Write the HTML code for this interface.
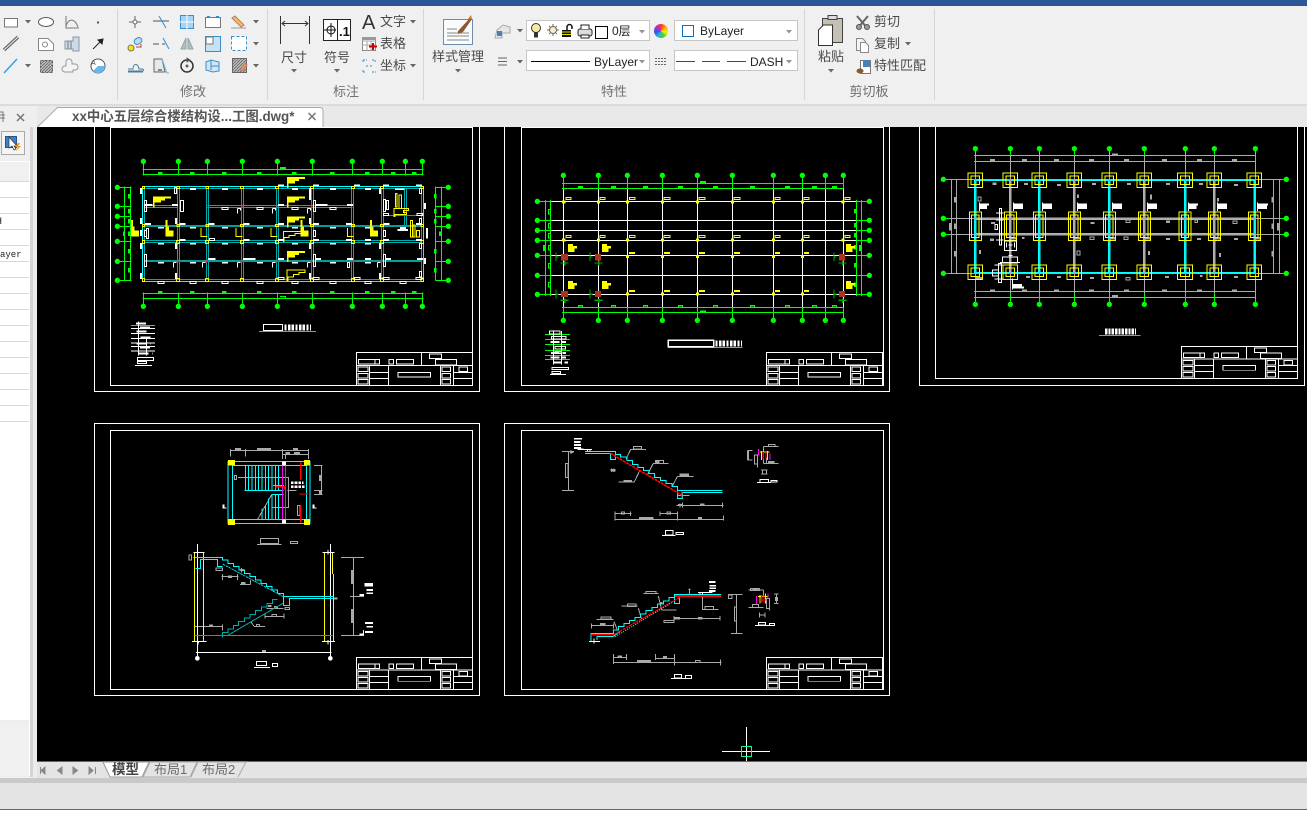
<!DOCTYPE html>
<html><head><meta charset="utf-8"><style>
html,body{margin:0;padding:0;width:1307px;height:821px;overflow:hidden;background:#fff}
svg{position:absolute;left:0;top:0}
text{font-family:"Liberation Sans","Noto Sans CJK SC","WenQuanYi Zen Hei",sans-serif;font-size:13px;fill:#4a4a4a}
.g{fill:#707070;text-anchor:middle}
.c{text-anchor:middle}
#w{position:absolute;left:654px;top:24px;width:14px;height:14px;border-radius:50%;background:conic-gradient(#f33,#fa0,#fe0,#4c4,#2bd,#35e,#a3c,#f33)}
</style></head><body>
<svg width="1307" height="821" viewBox="0 0 1307 821" xmlns="http://www.w3.org/2000/svg">
<defs>
<pattern id="h" width="3" height="3" patternUnits="userSpaceOnUse"><rect width="3" height="3" fill="#bbb"/><path d="M0 3L3 0" stroke="#666" stroke-width=".8"/></pattern>
<path id="t" d="M0 0h6l-3 3.500z" fill="#666"/>
<clipPath id="cv"><rect x="37" y="127" width="1270" height="634"/></clipPath>
<g id="tb" fill="none" stroke="#fff" stroke-width="3">
<path d="M0 0H349V99H0ZM195 0V39M0 39H349M39 39V99M96 39V99M252 39V99M291 39V99M39 60H96M39 78H96M291 60H349M291 78H349"/>
<path d="M6 21h50v14H6zM56 21h14v14H56zM98 21h14v14H98zM120 21h52v14h-52zM219 5h37v14h-37zM237 21h64v17h-64zM125 60h98v14h-98zM5 44h30v14H5zM5 63h30v14H5zM5 81h30v14H5zM257 44h26v14h-26zM257 63h26v14h-26zM257 81h26v14h-26zM308 44h26v14h-26z"/>
</g>
<path id="c1" d="M160 0h.01M265 0h.01M352 0h.01M457 0h.01M562 0h.01M667 0h.01M787 0h.01M877 0h.01M946 0h.01M997 0h.01"/>
<path id="c2" d="M190 0h.01M295 0h.01M382 0h.01M487 0h.01M592 0h.01M697 0h.01M820 0h.01M907 0h.01M976 0h.01M1030 0h.01"/>
<path id="c3" d="M196 0h.01M301 0h.01M388 0h.01M493 0h.01M598 0h.01M703 0h.01M826 0h.01M913 0h.01M1036 0h.01"/>
<path id="m1" d="M204 0h18M300 0h18M396 0h18M501 0h18M606 0h18M720 0h18M825 0h18"/>
<path id="f1" d="M-22-22h44v44h-44zM-13-13h26v26h-26z"/>
<path id="f2" d="M-18-43h36v86h-36zM-11-34h22v68h-22z"/>
<path id="fl" d="M0 0H54V6H36V12H24V19H4V33H0Z"/>
<path id="l" d="M0 0h6v20h4v12h14v18H0Z"/>
</defs>

<!-- chrome backgrounds -->
<rect width="1307" height="821" fill="#fff"/>
<rect width="1307" height="6" fill="#2b5797"/>
<rect y="6" width="1307" height="99" fill="#f0f0f0"/>
<rect y="104" width="1307" height="2" fill="#dcdcdc"/>
<rect y="106" width="1307" height="21" fill="#e9e9e9"/>
<path d="M117.500 9V100M267.500 9V100M423.500 9V100M804.500 9V100M934.500 9V100" stroke="#d6d6d6"/>

<!-- canvas -->
<rect x="37" y="127" width="1270" height="634" fill="#000"/>
<g clip-path="url(#cv)" shape-rendering="crispEdges">

<!-- SHEET 1 -->
<g transform="translate(90,125) scale(.33333)" fill="none" stroke-width="3">
<path stroke="#fff" d="M13 -30H1168V799H13ZM61 7H1148V781H61Z"/>
<g stroke="#0f0">
<path d="M157 133H1000M157 148H1000M157 505H1000M157 520H1000M103 184V466M122 184V466M1036 184V466M1054 184V466M160 109V152M265 109V152M352 109V152M457 109V152M562 109V152M667 109V152M787 109V152M877 109V152M946 109V152M997 109V152M160 502V544M265 502V544M352 502V544M457 502V544M562 502V544M667 502V544M787 502V544M877 502V544M946 502V544M997 502V544M82 187H125M82 244H125M82 274H125M82 304H125M82 349H125M82 409H125M82 466H125M1036 187H1075M1036 244H1075M1036 274H1075M1036 304H1075M1036 349H1075M1036 409H1075M1036 466H1075"/>
<g stroke-width="16" stroke-linecap="round" shape-rendering="auto"><use href="#c1" y="109"/><use href="#c1" y="544"/><path d="M82 187h.01M82 244h.01M82 274h.01M82 304h.01M82 349h.01M82 409h.01M82 466h.01M1075 187h.01M1075 244h.01M1075 274h.01M1075 304h.01M1075 349h.01M1075 409h.01M1075 466h.01"/></g>
<path stroke-width="7" d="M204 145h14M300 145h14M396 145h14M501 145h14M606 145h14M720 145h14M825 145h14M903 145h14M966 145h14M570 129h18M204 501h14M300 501h14M396 501h14M501 501h14M606 501h14M720 501h14M825 501h14M903 501h14M966 501h14"/>
<path stroke-width="7" d="M118 207v14M118 252v14M118 282v14M118 319v14M118 372v14M118 429v14M102 319v14M1036 207v14M1036 252v14M1036 282v14M1051 319v14M1036 372v14M1036 429v14"/>
<path d="M570 514h16v5"/><path d="M507 619H678M123 601H195" />
</g>
<g stroke="#0aa">
<path d="M163 190H994V463H163ZM163 241H264M163 247H264M352 241H787M352 247H787M163 346H994M163 352H994M262 190V463M268 190V463M349 190V463M355 190V463M454 190V463M460 190V463M559 190V463M565 190V463M664 190V463M670 190V463M784 190V463M790 190V463M874 190V463M880 190V463M943 190V300M949 190V300M881 272H994"/>
<path stroke-width="7" stroke="#0a9a9a" d="M163 303H994M163 408H994"/>
</g>
<path stroke="#0ff" d="M157 184H1000V469H157Z"/>
<path stroke="#f22" stroke-width="4" d="M456 238v10M561 238v10M666 238v10M264 402v10M350 402v10M456 402v10M561 402v10M666 402v10M789 405v8M875 402v10"/>
<path stroke="#ff0" d="M157 184h7v7h-7zM261 184h7v7h-7zM348 184h7v7h-7zM452 184h9v7h-9zM557 184h9v7h-9zM662 184h9v7h-9zM784 184h9v7h-9zM872 184h9v7h-9zM993 184h7v7h-7zM157 298h7v7h-7zM261 298h7v7h-7zM348 298h7v7h-7zM452 298h9v7h-9zM557 298h9v7h-9zM662 298h9v7h-9zM784 298h9v7h-9zM872 298h9v7h-9zM993 298h7v7h-7zM157 346h7v10h-7zM259 346h10v10h-10zM346 346h10v10h-10zM451 346h10v10h-10zM556 346h10v10h-10zM661 346h10v10h-10zM784 346h10v10h-10zM871 346h10v10h-10zM993 346h7v10h-7zM157 460h7v10h-7zM259 460h10v10h-10zM346 460h10v10h-10zM451 460h10v10h-10zM556 460h10v10h-10zM661 460h10v10h-10zM784 460h10v10h-10zM871 460h10v10h-10zM993 460h7v10h-7z"/>
<g fill="#ff0" stroke="none"><use href="#fl" x="591" y="156"/><use href="#fl" x="591" y="214"/><use href="#fl" x="591" y="274"/><use href="#fl" x="591" y="378"/><use href="#fl" x="189" y="214"/><use href="#l" x="123" y="285"/><use href="#l" x="227" y="285"/><use href="#l" x="632" y="285"/><use href="#l" x="840" y="285"/></g>
<path stroke="#ff0" d="M333 309v26h20M438 309v26h20M543 309v26h20M772 309v26h18M591 435H645V442H627V449H611V456H594V468H591ZM580 320H633V326H615V332H597V338H582V350H580ZM916 206h5v40h-5zM927 210h8v40h-8zM912 250H956V256H940V262H950V268H915V275H912ZM961 286h7v50h-7zM969 300h6v36h-6zM980 316h8v20h-8z"/>
<g stroke="#fff">
<g stroke-width="5"><use href="#m1" y="192"/><use href="#m1" y="308"/><use href="#m1" y="356"/><use href="#m1" y="413"/>
<path d="M564 181h18M669 181h18M792 181h18M879 181h18M978 181h18M165 297h18M268 297h18M356 297h18M460 297h18M564 297h18M669 297h18M768 297h18M880 297h18M978 297h18M165 240h22M246 240h18M564 240h18M677 240h36M771 240h18M268 345h18M460 345h18M564 345h18M669 345h18M768 345h18M825 345h18M879 345h18M978 345h18M354 402h22M459 402h38M564 402h18M677 402h16M771 402h18M825 402h18M887 402h16M981 402h18M922 315h32M930 309h18M915 193h28"/>
<path d="M153 189v18M153 279v18M153 354v18M153 444v18M258 354v18M258 444v18M660 189v36M660 279v18M660 354v18M660 444v18M870 189v18M870 354v18M870 444v18M258 279v18M1005 234v18M1005 399v18M1011 309v32M153 315v18"/>
</g>
<path d="M204 470h18v6h-18zM300 470h18v6h-18zM396 470h18v6h-18zM501 470h18v6h-18zM606 470h18v6h-18zM720 470h18v6h-18zM825 470h18v6h-18zM930 470h18v6h-18zM396 247h18v6h-18zM501 247h18v6h-18zM606 247h18v6h-18zM720 247h18v6h-18zM564 457h18v6h-18zM669 457h18v6h-18zM792 457h18v6h-18zM879 457h18v6h-18zM978 457h18v6h-18zM358 340h16v6h-16zM880 265h16v6h-16zM981 265h16v6h-16z"/>
<path d="M164 226h6v34h-6zM272 226h8v34h-8zM671 226h6v34h-6zM881 223h6v37h-6zM889 226h6v28h-6zM164 388h6v36h-6zM671 388h6v36h-6zM880 388h6v36h-6zM170 310h6v30h-6zM164 316h6v18h-6zM671 316h6v18h-6zM880 316h6v18h-6zM253 187h7v18h-7zM988 190h7v16h-7zM988 280h7v16h-7zM988 355h7v16h-7zM988 440h7v16h-7zM772 412h7v16h-7z"/>
<path d="M442 250h9v6M547 250h9v6M652 250h9v6M442 250v16M547 250v16M652 250v16M250 412h9M250 412v16M337 412h9M337 412v16M442 412h9M442 412v16M547 412h9M547 412v16M652 412h9M652 412v16M862 412h9M862 412v16"/></g>
<g stroke="#fff"><path d="M520 598h58v19h-58z"/><path stroke-width="18" stroke-dasharray="7 4" d="M583 607H663"/>
<path d="M123 611H195M123 626H195M123 641H195M123 654H195M123 664H195M123 678H195M135 721H186M145 590V692M169 640V692M142 698h48v9h-48zM142 710h28v6h-28z"/><path stroke-width="6" stroke-dasharray="30 10" d="M138 596H170M150 607h32M140 620h40M152 638h32M140 656h42M150 668h32M146 686h42"/></g>
<use href="#tb" x="799" y="682"/>
</g>

<!-- SHEET 2 -->
<g transform="translate(500,125) scale(.33333)" fill="none" stroke-width="3">
<path stroke="#fff" d="M13 -30H1168V799H13ZM64 7H1150V781H64Z"/>
<path stroke="#fff" d="M155 229H1068M155 286H1068M155 316H1068M155 346H1068M155 391H1068M155 451H1068M155 508H1068M190 190V547M295 190V547M382 190V547M487 190V547M592 190V547M697 190V547M820 190V547M907 190V547M976 190V547M1030 190V547"/>
<g stroke="#0f0">
<path d="M186 175H1030M186 190H1030M186 547H1030M186 562H1030M136 225V513M152 225V513M1069 225V513M1084 225V513M190 151V190M295 151V190M382 151V190M487 151V190M592 151V190M697 151V190M820 151V190M907 151V190M976 151V190M1030 151V190M190 547V586M295 547V586M382 547V586M487 547V586M592 547V586M697 547V586M820 547V586M907 547V586M976 547V586M1030 547V586M112 229H155M112 286H155M112 316H155M112 346H155M112 391H155M112 451H155M112 508H155M1068 229H1108M1068 286H1108M1068 316H1108M1068 346H1108M1068 391H1108M1068 451H1108M1068 508H1108"/>
<g stroke-width="16" stroke-linecap="round" shape-rendering="auto"><use href="#c2" y="151"/><use href="#c2" y="586"/><path d="M112 229h.01M112 286h.01M112 316h.01M112 346h.01M112 391h.01M112 451h.01M112 508h.01M1108 229h.01M1108 286h.01M1108 316h.01M1108 346h.01M1108 391h.01M1108 451h.01M1108 508h.01"/></g>
<path stroke-width="7" d="M234 186h15M333 186h15M429 186h15M534 186h15M639 186h15M750 186h15M855 186h15M936 186h15M996 186h15M600 171h18M600 560h18M133 360v18M1081 360v18M1066 252v14M1066 294v14M1066 324v14M1066 360v14M1066 414v14M1066 472v14"/>
<path d="M235 541h13v5h-13zM334 541h13v5h-13zM430 541h13v5h-13zM535 541h13v5h-13zM640 541h13v5h-13zM751 541h13v5h-13zM856 541h13v5h-13zM937 541h13v5h-13zM997 541h13v5h-13zM145 253h6v14h-6zM145 295h6v14h-6zM145 325h6v14h-6zM145 361h6v14h-6zM145 415h6v14h-6zM145 472h6v14h-6z"/>
<path d="M135 628H210M135 643H210M135 658H210M135 676H210M135 691H210M135 703H210M504 667H728"/>
</g>
<g stroke="#0a0" stroke-width="4"><path d="M168 382v26M176 396h-10M182 414h24M194 408v14M270 382v26M278 396h-10M284 414h24M296 408v14M1002 382v26M1010 396h-10M1016 414h24M1028 408v14M168 494v26M176 508h-10M182 526h24M194 520v14M270 494v26M278 508h-10M284 526h24M296 520v14M1002 494v26M1010 508h-10M1016 526h24M1028 520v14"/></g>
<path fill="#a32" stroke="#a32" d="M184 389h18v16h-18zM286 389h16v16h-16zM1018 389h16v16h-16zM184 499h18v16h-18zM286 499h16v16h-16zM1018 499h16v16h-16z"/>
<g stroke="#ff0"><path d="M198 217h15v7h-15zM300 217h15v7h-15zM388 217h17v7h-17zM492 217h18v7h-18zM597 217h18v7h-18zM702 217h18v7h-18zM825 217h15v7h-15zM912 217h15v7h-15zM1035 217h15v7h-15zM198 331h15v7h-15zM300 331h15v7h-15zM388 331h17v7h-17zM492 331h18v7h-18zM597 331h18v7h-18zM702 331h18v7h-18zM825 331h15v7h-15zM912 331h15v7h-15zM1035 331h15v7h-15z"/>
<path stroke-width="6" d="M387 384h18M492 384h18M597 384h18M702 384h18M825 384h15M912 384h15M387 498h18M492 498h18M597 498h18M702 498h18M825 498h15M912 498h15"/>
<path stroke-width="9" d="M186 231h10M291 231h9M378 231h9M483 231h9M588 231h9M693 231h9M816 231h9M903 231h9M1024 231h10M186 345h10M291 345h9M378 345h9M483 345h9M588 345h9M693 345h9M816 345h9M903 345h9M1024 345h10M378 394h9M483 394h9M588 394h9M693 394h9M816 394h9M903 394h9M378 507h9M483 507h9M588 507h9M693 507h9M816 507h9M903 507h9"/>
<g fill="#ff0" stroke="none"><path d="M204 357h15v6h12v7h-7v11h-20zM306 357h15v6h12v7h-7v11h-20zM1038 357h15v6h12v7h-7v11h-20zM204 468h15v6h12v7h-7v11h-20zM306 468h15v6h12v7h-7v11h-20zM1038 468h15v6h12v7h-7v11h-20z"/></g></g>
<g stroke="#fff"><path stroke-width="4" d="M505 646h136v19H505z"/><path stroke-width="18" stroke-dasharray="7 4" d="M646 655H726"/>
<path d="M148 618h32v9h-32zM154 634h44v8h-44zM165 664h32v8h-32zM165 680h18v6h-18zM156 727h50v7h-50zM156 739h26v7h-26zM150 749H198M160 618v100M184 618v100"/><path stroke-width="6" stroke-dasharray="26 8" d="M152 651H198M153 684H198M152 698H198M160 713H204"/></g>
<use href="#tb" x="799" y="682"/>
</g>

<!-- SHEET 3 -->
<g transform="translate(910,125) scale(.33333)" fill="none" stroke-width="3">
<path stroke="#fff" d="M28 -30H1184V781H28ZM76 -10H1162V760H76Z"/>
<g stroke="#0ff"><path stroke-width="8" d="M196 165V445M301 165V445M388 165V445M493 165V445M598 165V445M703 165V445M826 165V445M913 165V445M1034 165V445M196 281H1036M196 328H1036"/><path stroke-width="5" d="M196 165H1036M196 443H1036"/></g>
<g stroke="#aaa"><path d="M192 91H1036M192 109H1036M192 499H1036M192 517H1036M124 163V445M139 163V445M1090 163V445M1108 163V445M108 163H1120M108 280H1120M108 328H1120M108 445H1120M196 71V530M301 71V530M388 71V530M493 71V530M598 71V530M703 71V530M826 71V530M913 71V530M1036 71V530"/>
<path stroke-width="7" d="M240 105h15M336 105h15M432 105h15M537 105h15M642 105h15M756 105h15M861 105h15M966 105h15M606 89h18M240 497h15M336 497h15M432 497h15M537 497h15M642 497h15M756 497h15M861 497h15M966 497h15M606 513h18M243 294h12M542 294h12M768 290h12M248 176h12M342 177h12M441 180h12M546 177h12M651 177h12M768 177h12M867 177h12M972 180h12M336 339h8M240 344h12M861 342h12M768 342h12M972 342h12M348 456h12M441 456h12M540 459h12M765 456h12M870 453h8M972 456h12M135 216v16M135 296v16M135 378v16M120 294v22M1104 294v22M1088 216v16M1088 296v16M1088 378v16M504 209v10M210 375v12M717 378v12M723 209v14M930 384v12M924 219v10"/>
<path stroke-width="8" d="M298 340h22M490 340h22M595 340h22M700 340h22M910 340h22M1030 340h22M196 460h22"/>
<path d="M204 216h9v12h-9zM501 378h9v12h-9zM648 285h12v7h-12zM855 285h8v8h-8zM969 288h12v8h-12zM540 336h12v8h-12zM642 336h12v8h-12zM648 457h12v8h-12z"/></g>
<g stroke="#0f0"><path d="M100 163H118M1112 163H1129M100 280H118M1112 280H1129M100 328H118M1112 328H1129M100 445H118M1112 445H1129M301 78V92M493 78V92M703 78V92M913 78V92M301 505V530M388 505V530M493 505V530M598 505V530M703 505V530M826 505V530M913 505V530M567 631H692"/>
<g stroke-width="16" stroke-linecap="round" shape-rendering="auto"><use href="#c3" y="71"/><use href="#c3" y="538"/><path d="M100 163h.01M100 280h.01M100 328h.01M100 445h.01M1129 163h.01M1129 280h.01M1129 328h.01M1129 445h.01"/></g></g>
<g stroke="#ff0"><use href="#f1" x="196" y="166"/><use href="#f1" x="301" y="166"/><use href="#f1" x="388" y="166"/><use href="#f1" x="493" y="166"/><use href="#f1" x="598" y="166"/><use href="#f1" x="703" y="166"/><use href="#f1" x="825" y="166"/><use href="#f1" x="913" y="166"/><use href="#f1" x="1033" y="166"/><use href="#f1" x="196" y="442"/><use href="#f1" x="301" y="442"/><use href="#f1" x="388" y="442"/><use href="#f1" x="493" y="442"/><use href="#f1" x="598" y="442"/><use href="#f1" x="703" y="442"/><use href="#f1" x="825" y="442"/><use href="#f1" x="913" y="442"/><use href="#f1" x="1033" y="442"/><use href="#f2" x="196" y="304"/><use href="#f2" x="301" y="304"/><use href="#f2" x="388" y="304"/><use href="#f2" x="493" y="304"/><use href="#f2" x="598" y="304"/><use href="#f2" x="703" y="304"/><use href="#f2" x="825" y="304"/><use href="#f2" x="913" y="304"/><use href="#f2" x="1033" y="304"/></g>
<g fill="#fff" stroke="none"><path d="M207 232h3v3h27v6h-6v11h-21v6h-3zM309 232h3v3h27v17h-27v6h-3zM396 232h3v3h27v17h-27v6h-3zM501 232h3v3h27v17h-27v6h-3zM606 232h3v3h27v17h-27v6h-3zM711 232h3v3h27v17h-27v6h-3zM834 232h3v3h27v6h-4v11h-23v6h-3zM921 232h3v3h27v17h-27v6h-3zM1041 232h3v3h30v6h-3v11h-27v6h-3zM306 460h3v17h27v7h6v6h-33v3h-3z"/></g>
<g stroke="#fff"><path d="M268 250h7v110h-7zM258 264h22M258 285h22M255 298h8v16h-8zM258 345h22M283 348h36v28h-36zM295 392h12M277 396h46v18h-46zM270 412h60M265 415h10v58h-10zM247 435h18v18h-18zM253 420h24M253 462h24M295 360h12M290 352v16M314 352v16"/><path stroke-width="18" stroke-dasharray="7 3" d="M585 620H678"/></g>
<use href="#tb" transform="translate(814,664) scale(1,.97)"/>
</g>

<!-- SHEET 4 -->
<g transform="translate(90,420) scale(.33333)" fill="none" stroke-width="3">
<path stroke="#fff" d="M13 10H1168V826H13ZM61 31H1148V808H61Z"/>
<g stroke="#aaa"><path d="M421 91H655M421 87V110M466 87V110M577 87V117M655 87V117M577 103H655M586 103V117M672 136H698M694 136V223M672 211H698M672 223H698M444 172H596V262H545M549 196H582M592 211H620M503 298L545 224M622 256h8v30h-8zM433 166h7v13h-7zM753 412H822M790 412V646M780 529H822M753 646H822M313 619H398M398 614V632M395 470H445M397 462V480M443 462V480M450 494H482M482 480V494M525 590H584M525 580V596M582 580V596M530 565H580M492 619H525M482 604L492 619M585 562h14v7h-14zM546 583h14v6h-14zM499 613h10v6h-10zM378 444h20v8h-20zM297 405h8v15h-8zM310 413h15M455 444v14M450 452h12"/>
<path stroke-width="7" d="M435 87h18M501 87h42M609 87h15M586 100h14M612 100h18M690 165v18M690 211v12M453 490h14M357 617h12M414 470h12M552 562h12M516 693h12"/>
<path stroke-width="9" d="M787 450v42M787 567v42"/><path d="M501 373H575M511 355h54v16h-54zM601 364h22v7h-22z"/></g>
<path stroke="#0ff" d="M414 124H660V310H414ZM428 136H650V298H428ZM466 136V211M476 136V211M486 136V211M496 136V211M506 136V211M516 136V211M526 136V211M536 136V211M546 136V211M556 136V211M566 136V211M516 265V298M526 255V298M536 235V298M546 224V298M556 224V298M566 224V298M463 211H580M545 223H580"/>
<path stroke="#f0f" d="M578 136V298M587 136V298"/>
<path stroke="#f00" stroke-width="4" d="M632 127V180M632 256V308M558 205v-5h26v8M628 222h28"/>
<path fill="#ff0" stroke="none" d="M414 120h21v17h-21zM642 120h18v17h-18zM414 297h21v18h-21zM642 297h18v18h-18z"/>
<path fill="#fff" stroke="none" d="M576 124h12v12h-12zM576 298h12v13h-12zM398 253h6v9h6v3h-13v-3h1zM668 253h6v9h6v3h-13v-3h1z"/>
<path stroke="#fff" stroke-width="7" stroke-dasharray="8 3" d="M603 188H640M603 200H645"/>
<path stroke="#ff0" d="M313 398V664M340 398V664M703 398V664M727 398V462M730 462V664"/>
<path stroke="#fff" d="M322 372V708M721 372V708M310 398H344M697 398H734M306 664H350M696 664H735M318 697H725M492 742H540M499 724h31v13h-31zM547 730h16v9h-16zM322 390v14M714 390v14M326 664l-3 10M714 660v14"/>
<path stroke="#fff" stroke-width="5" d="M825 494H849M829 510H849M829 520H849M825 609H849M829 620H849M825 636H849"/>
<path stroke="#fff" d="M808 524h12v3h-12M808 642h12v3h-12M821 630v12M825 490h22v8h-22z"/>
<g stroke-width="14" stroke-linecap="round" stroke="#fff" shape-rendering="auto"><path d="M322 715h.01M721 715h.01"/></g>
<path stroke="#0aa" d="M313 646H727M398 652v-14h16v-11h16v-11h16v-11h17v-11h17v-11h17v-11h17v-11h17v-11h16v-11h15M415 645L580 549"/>
<path stroke="#0ff" d="M316 445H331V418H382V440H398M316 412H398V420H414.500V430H431V440H447.500V450H464V460H480.500V470H497V480H513.500V490H530V500H546.500V510H563V520H580V529H730M580 520V556H598V536H730"/>
<path stroke="#0cc" stroke-dasharray="8 2" d="M398 432L580 530"/>
<path stroke="#aaa" stroke-width="6" d="M732 536h10M452 450h8M534 558h10"/>
<use href="#tb" transform="translate(799,712) scale(1,.97)"/>
</g>

<!-- SHEET 5 -->
<g transform="translate(500,420) scale(.33333)" fill="none" stroke-width="3">
<path stroke="#fff" d="M13 10H1168V826H13ZM64 31H1150V808H64Z"/>
<g stroke="#aaa"><path d="M186 94H222M205 94V211M186 211H222M196 130h8v42h-8zM392 88L378 118M392 88H438M400 79h25v8h-25zM459 131L442 165M459 131H505M466 122h24v8h-24zM532 170L516 200M532 170H580M540 162h26v7h-26zM403 186L420 150M356 186H403M532 227H568M540 250V262M530 256H670M547 248V262M668 248V262M345 298H670M345 274V302M532 274V302M670 286V302M345 280H394M392 274V288M480 280H532M480 274V288M364 276h10v6h-10zM501 276h10v6h-10zM330 150h16M334 146v10M342 146v10M790 80H835M805 73h20v7h-20zM790 80V110M764 105h9v27h-9zM773 105V142M742 92V120M742 92h16M742 120h16M744 94h2v24M790 130H835M783 150h20M783 162h20M787 150V162M800 150V162M790 115V130M800 112V130"/>
<path stroke-width="7" d="M370 184h26M465 127h14M540 166h26M600 254h14M417 295h44M594 295h12M534 255h12M335 151h12M804 127h20M213 96h8M213 92v8"/>
<path d="M568 505V525M565 508h6M607 530V568H655M615 560h26v8h-26zM475 528L485 570M485 570H530M492 601h30v6h-30zM415 565L425 598M365 558H412M382 552h26v7h-26zM430 520H475M438 514h30v6h-30zM342 605L352 630M290 598H340M303 591h30v6h-30zM274 610V626M274 616H342M340 610V626M522 595H662M522 588V602M660 588V602M340 702V720M380 702V720M340 712H380M466 702V720M524 702V720M466 716H524M340 727H665M340 718V732M523 718V736M662 718V736M586 721h14v6h-14zM684 523H728M709 523V640M693 640H728M703 561h6v42h-6zM686 525h10v10h-10zM745 510H790M752 505h26v7h-26zM790 510V530M745 562H790M757 553h18v9h-18zM800 535h8v30h-8zM808 535V572M830 522V550M822 522h14M822 550h14M826 532h6v10h-6zM778 578V592M795 578V592M778 585H795"/>
<path stroke-width="7" d="M300 612h16M524 595h16M594 595h14M352 710h14M489 711h12M411 723h42M480 549h8M758 507h18M532 595h6"/></g>
<path stroke="#0ff" d="M255 94H347V103H362V111H381V122H398V133H414V142H431V152H447V161H464V173H481V182H498V190H516V199H532V211H668M255 100H331V119H347V103M532 199V236H547V217H668"/>
<path stroke="#f00" stroke-width="5" stroke-dasharray="9 2" d="M331 100L545 225M545 215V232"/>
<path stroke="#0ff" d="M273 664V641H340V630H355V620H372V610H389V602H405V592H422V582H438V572H456V562H472V552H490V543H507V533H523V523H663M291 660V649H340L360 635M523 523V551H539V530"/>
<path stroke="#f00" stroke-width="5" d="M276 644H340M525 528H663"/>
<path stroke="#f00" stroke-width="4" stroke-dasharray="9 2" d="M340 645L540 532"/>
<path stroke="#0cc" stroke-dasharray="4 3" d="M345 650L520 545"/>
<path stroke="#f0f" d="M775 87V107M810 100V120M770 528V552M804 520V535"/>
<path stroke="#ff0" d="M785 93V120M803 93V120M780 96H808M780 525V550M797 520V550M774 530H802"/>
<path stroke="#f00" stroke-width="4" d="M790 96V118M798 96V118M785 525V548M792 525V548M776 540H800"/>
<g stroke="#fff"><path stroke-width="5" d="M222 56h24M222 66h20M222 75h21M222 84h21M232 88h18M627 486h20M628 497h20M628 505h20M627 513h20"/><path d="M250 88h26M262 88v6M270 88v6M594 518h44M600 518v6M608 518v6M267 664h33M282 656v15M486 346h41M496 331h23v14h-23zM528 337h23v7h-23zM771 188h42M780 178h26v9h-26zM813 181h18v5h-18zM765 616h60M775 607h22v8h-22zM808 610h16v6h-16zM513 775h62M523 763h22v11h-22zM556 766h19v9h-19z"/></g>
<use href="#tb" transform="translate(799,712) scale(1,.97)"/>
</g>
<path d="M722 751.500H770M746.500 727V762" stroke="#fff"/>
<rect x="741.500" y="746.500" width="10" height="10" fill="none" stroke="#0f8"/>
</g>

<!-- left panel -->
<rect x="0" y="106" width="37" height="676" fill="#efefef"/>
<rect x="30" y="127" width="3" height="650" fill="#d4d4d4"/>
<rect x="33" y="127" width="4" height="650" fill="#ececec"/>
<rect x="0" y="161" width="30" height="615" fill="#fff"/>
<rect x="0" y="162" width="29" height="19" fill="#f0f0f0"/>
<path d="M0 181.500H29M0 197.500H29M0 213.500H29M0 229.500H29M0 245.500H29M0 261.500H29M0 277.500H29M0 293.500H29M0 309.500H29M0 325.500H29M0 341.500H29M0 357.500H29M0 373.500H29M0 389.500H29M0 405.500H29M0 421.500H29" stroke="#d8d8d8"/>
<rect x="0" y="720" width="29" height="4" fill="#eee"/><rect x="0" y="724" width="29" height="52" fill="#f0f0f0"/>
<path d="M0 112h3v10M0 118h5M0 115h5" stroke="#777" fill="none"/>
<path d="M17 114l7 7M24 114l-7 7" stroke="#777" stroke-width="1.500"/>
<rect x="1.500" y="131.500" width="23" height="23" fill="#f4f4f4" stroke="#aaa"/>
<rect x="5.500" y="136.500" width="11" height="11" fill="#3f7fc4" stroke="#26558f"/>
<path d="M9 137v11l3-2 2 4 2-1-2-3h3z" fill="#fff" stroke="#333" stroke-width=".7"/>
<path d="M18 143l-3 4h3l-2 4 5-5h-3l2-3z" fill="#f0960e"/>
<text x="-4" y="224" style="font-family:'Liberation Mono',monospace;font-size:10px;fill:#222">H</text>
<text x="0" y="257" style="font-family:'Liberation Mono',monospace;font-size:9px;fill:#222">ayer</text>

<!-- doc tab -->
<path d="M37.500 127L57.500 107.500H320a3 3 0 0 1 3 3V127" fill="#fff" stroke="#aaa"/>
<text x="72" y="121" style="font-weight:bold;font-size:13.400px;fill:#555">xx中心五层综合楼结构设...工图.dwg*</text>
<path d="M308.500 113l7 7M315.500 113l-7 7" stroke="#777" stroke-width="1.500"/>

<!-- Bottom -->
<rect x="37" y="762" width="1270" height="16" fill="#e4e4e4"/>
<rect x="37" y="761" width="1270" height="1" fill="#666"/>
<rect y="778" width="1307" height="5" fill="#c9c9c9"/>
<rect y="783" width="1307" height="26" fill="#e4e4e4"/>
<rect y="809" width="1307" height="1" fill="#666"/>
<path d="M40.500 767v7M45 767l-4 3.500 4 3.500zM62 767l-4.500 3.500 4.500 3.500zM73 767l4.500 3.500-4.500 3.500zM89 767l4 3.500-4 3.500zM95.500 767v7" fill="#888" stroke="#888"/>
<path d="M103 762L110 777H142L149 762Z" fill="#fff" stroke="#999"/>
<path d="M143 777L150 762H197L190 777ZM191 777L198 762H246L238 777" fill="#e4e4e4" stroke="#aaa"/>
<text x="112" y="774" style="font-weight:bold;font-size:13.500px;fill:#444">模型</text>
<text x="154" y="774" style="font-size:13px;fill:#6a6a6a">布局1</text>
<text x="202" y="774" style="font-size:13px;fill:#6a6a6a">布局2</text>

<!-- ribbon group 1 icons -->
<g fill="none" stroke="#777">
<rect x="4.500" y="18.500" width="13" height="8.500" fill="#fff"/>
<ellipse cx="46" cy="22" rx="7.500" ry="4.500" fill="#fff" stroke="#555"/>
<path d="M66 16V28H79M66 26C69 17 75 19 78 27"/>
<path d="M97 21.500h2v2h-2z" fill="#555" stroke="none"/>
<path d="M4 50L18 37" stroke="#666" stroke-width="3.500"/><path d="M4 50L18 37" stroke="#eee" stroke-width="1"/>
<path d="M38.500 38.500H48L53.500 44V50.500H38.500Z" fill="#fff" stroke="#888"/><circle cx="45" cy="44.500" r="2.500" stroke="#888"/>
<path d="M65 41h8v-4h6v14h-6v-2h-8z" fill="#cddbe8" stroke="#8899a8"/><path d="M68 41v8M71 41v8"/>
<path d="M93 49L101 41" stroke="#222"/><path d="M98 40l5-1-1 5z" fill="#222" stroke="#222"/>
<path d="M4 73L17 59" stroke="#37a0e4" stroke-width="1.500"/>
<rect x="40.500" y="60.500" width="12" height="12" fill="url(#h)" stroke="#666" stroke-dasharray="3 1"/>
<path d="M66 62a3 3 0 0 1 6 0v2h3a3 3 0 1 1 0 6h-2v2h-8a3 3 0 0 1 0-6h1z" fill="#f4f4f4" stroke="#999"/>
<circle cx="98" cy="66" r="7" fill="#fff" stroke="#555"/><path d="M98 66h7a7 7 0 0 1-12 5z" fill="#6cb7e6" stroke="none"/>
</g>
<text x="91" y="65" style="font-size:7px">A</text>
<use href="#t" x="25" y="20"/><use href="#t" x="25" y="64"/>

<!-- group 2 icons -->
<g fill="none" stroke="#666">
<path d="M129 22h12M135 16v12"/><circle cx="135" cy="22" r="2" fill="#fff"/>
<path d="M153 21H169" stroke="#555"/><path d="M159 16L166 28" stroke="#2c8fd8"/>
<rect x="180.500" y="15.500" width="13" height="13" fill="#a9d3f0" stroke="#3a8fc8"/><path d="M187 15V29M180 22H194" stroke="#fff"/>
<rect x="205.500" y="17.500" width="15" height="10" fill="#fff" stroke="#777"/><path d="M207 17h3M216 17h3" stroke="#2c8fd8" stroke-width="2"/>
<path d="M232 18l9 9 3-2-9-9z" fill="#f0c050" stroke="#b77"/><path d="M231 28H246" stroke="#999"/>
<circle cx="131" cy="48" r="3" fill="#ffe200" stroke="#777"/><rect x="134" y="38" width="8" height="6" rx="3" fill="#bcdcf5" stroke="#3a8fc8" transform="rotate(-30 138 41)"/><path d="M136 47h5v-3" stroke="#c33"/>
<path d="M153 44H159M162 44H165" stroke="#555"/><path d="M163 38L169 49" stroke="#2c8fd8"/>
<path d="M186 38L181 49H186ZM188 38L193 49H188Z" fill="#bbb" stroke="#8aa"/>
<rect x="205.500" y="36.500" width="15" height="15" fill="#c5e2f7" stroke="#3a8fc8"/><rect x="206" y="37" width="7" height="7" fill="#fff" stroke="#777"/>
<rect x="231.500" y="36.500" width="15" height="14" fill="#fff" stroke="#3a8fc8" stroke-dasharray="3 2"/>
<path d="M128 69h5c0-6 5-6 6 0h3c2 0 2 2 0 2H128M128 72H143" stroke="#4a7d9d"/>
<path d="M154 59h8l3 13h-11z" fill="#e8e8e8" stroke="#666"/><path d="M162 59l5 14h2" stroke="#6fb5e0"/><path d="M158 70h4" stroke="#222"/>
<circle cx="187" cy="66" r="6" stroke="#333" stroke-width="1.500"/><circle cx="187" cy="66" r="1" fill="#333"/><path d="M187 58l3 2-3 2z" fill="#333"/>
<path d="M206 62l5-2 8 2v9l-6 1-7-2z" fill="#cfe6f7" stroke="#3a8fc8"/><path d="M211 60v10M219 66h-8" stroke="#3a8fc8"/>
<rect x="232.500" y="58.500" width="14" height="14" fill="url(#h)" stroke="#666"/><path d="M240 70l5-7 2 2-5 6z" fill="#e8a43a" stroke="#b77"/>
</g>
<use href="#t" x="253" y="20"/><use href="#t" x="253" y="42"/><use href="#t" x="253" y="64"/>

<!-- group 3 -->
<g fill="none" stroke="#333">
<path d="M280.500 16V44M309.500 16V44" /><path d="M282 23.500H308" /><path d="M285 21l-3 2.500 3 2.500M305 21l3 2.500-3 2.500"/>
<rect x="323.500" y="19.500" width="27" height="21" fill="#fff" stroke="#222"/><path d="M337.500 19.500V41" stroke="#222"/>
<circle cx="331" cy="30" r="4" stroke="#111"/><path d="M324 30h12M331 23v14" stroke="#111"/>
<rect x="362.500" y="37.500" width="13" height="13" fill="#fff" stroke="#888"/><path d="M362 41H376M362 45H376M367 41V51M371 41V51" stroke="#aaa"/><path d="M362 37h14v3h-14z" fill="#999" stroke="none"/>
<path d="M369 46.500h8M373 43v7" stroke="#c00" stroke-width="2"/>
<path d="M363 60h4M363 60v3M372 60h3M375 60v3M363 72v-3M363 72h3M372 72h4M370 66h2M366 66h2" stroke="#3a8fc8" stroke-dasharray="2 1"/>
</g>
<text x="339" y="36" style="font-weight:bold;font-size:13px;fill:#111">.1</text>
<text x="362" y="29" style="font-size:20px;fill:#333">A</text>
<text x="380" y="26">文字</text><text x="380" y="48">表格</text><text x="380" y="70">坐标</text>
<use href="#t" x="410" y="20"/><use href="#t" x="410" y="64"/>
<text x="294" y="62" class="c" style="font-size:13px">尺寸</text>
<text x="337" y="62" class="c" style="font-size:13px">符号</text>
<use href="#t" x="291" y="69"/><use href="#t" x="334" y="69"/>

<!-- group 4 -->
<rect x="443.500" y="19.500" width="29" height="25" fill="#f9fbfd" stroke="#6d8caa"/>
<path d="M447 29h10M447 33h22M447 36h22M447 40h22" stroke="#888"/>
<path d="M458 31L470 18l2 1-9 13-5 2z" fill="#8a5a2e"/><path d="M468 19l3-4 1 4z" fill="#c87f30"/>
<text x="458" y="61" class="c" style="font-size:13px">样式管理</text>
<use href="#t" x="455" y="69"/>
<path d="M497 30l6-5 7 2v6h-8v5h-7z" fill="#e6e6e6" stroke="#aaa"/><rect x="497" y="31" width="5" height="5" fill="#4a7fb8"/>
<use href="#t" x="517" y="29"/><use href="#t" x="517" y="60"/>
<path d="M498 58h9M498 61.500h9M498 65h9" stroke="#666"/>
<g fill="#fff" stroke="#c6c6c6"><rect x="526.500" y="20.500" width="123" height="20"/><rect x="526.500" y="50.500" width="123" height="20"/><rect x="674.500" y="20.500" width="123" height="20"/><rect x="674.500" y="50.500" width="123" height="20"/></g>
<g opacity=".7"><use href="#t" x="639" y="30"/><use href="#t" x="639" y="60"/><use href="#t" x="786" y="30"/><use href="#t" x="786" y="60"/></g>
<circle cx="536" cy="28" r="4.500" fill="#f7e9a0" stroke="#333"/><path d="M534.500 33h3v4h-3z" fill="#333" stroke="#333"/>
<circle cx="553" cy="30" r="3.500" fill="#f8eec0" stroke="#666"/><path d="M553 24v2M553 34v2M547 30h2M557 30h2M549 26l1 1M557 26l-1 1M549 34l1-1M557 34l-1-1" stroke="#666"/>
<rect x="562" y="30" width="9" height="7" fill="#111"/><path d="M562 32h9M562 34.500h9" stroke="#dd0"/><path d="M567 30v-3a2.500 2.500 0 0 1 5 0v2" fill="none" stroke="#111" stroke-width="1.500"/>
<rect x="578" y="29" width="14" height="7" rx="2" fill="#ddd" stroke="#222"/><path d="M581 29v-4h8v4M581 38v-3h8v3z" fill="#fff" stroke="#222"/>
<rect x="595.500" y="26.500" width="12" height="12" fill="#fff" stroke="#000"/>
<text x="612" y="35" style="font-size:12px;fill:#222">0层</text>
<path d="M531 61.500H590" stroke="#000"/>
<text x="594" y="66" style="font-size:12px;fill:#222">ByLayer</text>
<rect x="682.500" y="25.500" width="11" height="11" fill="#fff" stroke="#0a6fc4"/>
<text x="700" y="35" style="font-size:12px;fill:#222">ByLayer</text>
<path d="M676 61.500h19M702 61.500h18M727 61.500h19" stroke="#e00"/>
<text x="750" y="66" style="font-size:12px;fill:#222">DASH</text>
<path d="M655 58.500h12M655 61.500h12M655 64.500h12" stroke="#666" stroke-dasharray="2 1"/>

<!-- clipboard -->
<rect x="822.500" y="18.500" width="20" height="24" fill="#c6bfb3" stroke="#444"/>
<rect x="828" y="15.500" width="9" height="4" fill="#ddd" stroke="#444"/>
<path d="M818.500 30l5-5h9v20.500h-14z" fill="#fff" stroke="#333"/>
<text x="831" y="61" class="c" style="font-size:13px">粘贴</text>
<use href="#t" x="828" y="69"/>
<path d="M857 16l11 13M868 16l-11 13" stroke="#666" stroke-width="2"/><circle cx="859" cy="27" r="2.500" fill="#999" stroke="#555"/><circle cx="867" cy="27" r="2.500" fill="#999" stroke="#555"/>
<path d="M856.500 38.500h6l3 3v9h-9z" fill="#f4f4f4" stroke="#888"/><path d="M860.500 42.500h5l3 3v7h-8z" fill="#fff" stroke="#888"/>
<rect x="860.500" y="60.500" width="10" height="13" fill="#fff" stroke="#777"/><rect x="863" y="60" width="7" height="7" fill="#4a80b8"/><ellipse cx="860" cy="71" rx="3.500" ry="2.500" fill="#8a5a2e"/>
<text x="874" y="26">剪切</text><text x="874" y="48">复制</text><text x="874" y="70">特性匹配</text>
<use href="#t" x="905" y="42"/>

<!-- group labels -->
<text x="193" y="96" class="g">修改</text>
<text x="346" y="96" class="g">标注</text>
<text x="614" y="96" class="g">特性</text>
<text x="869" y="96" class="g">剪切板</text>
</svg>
<div id="w"></div>
</body></html>
